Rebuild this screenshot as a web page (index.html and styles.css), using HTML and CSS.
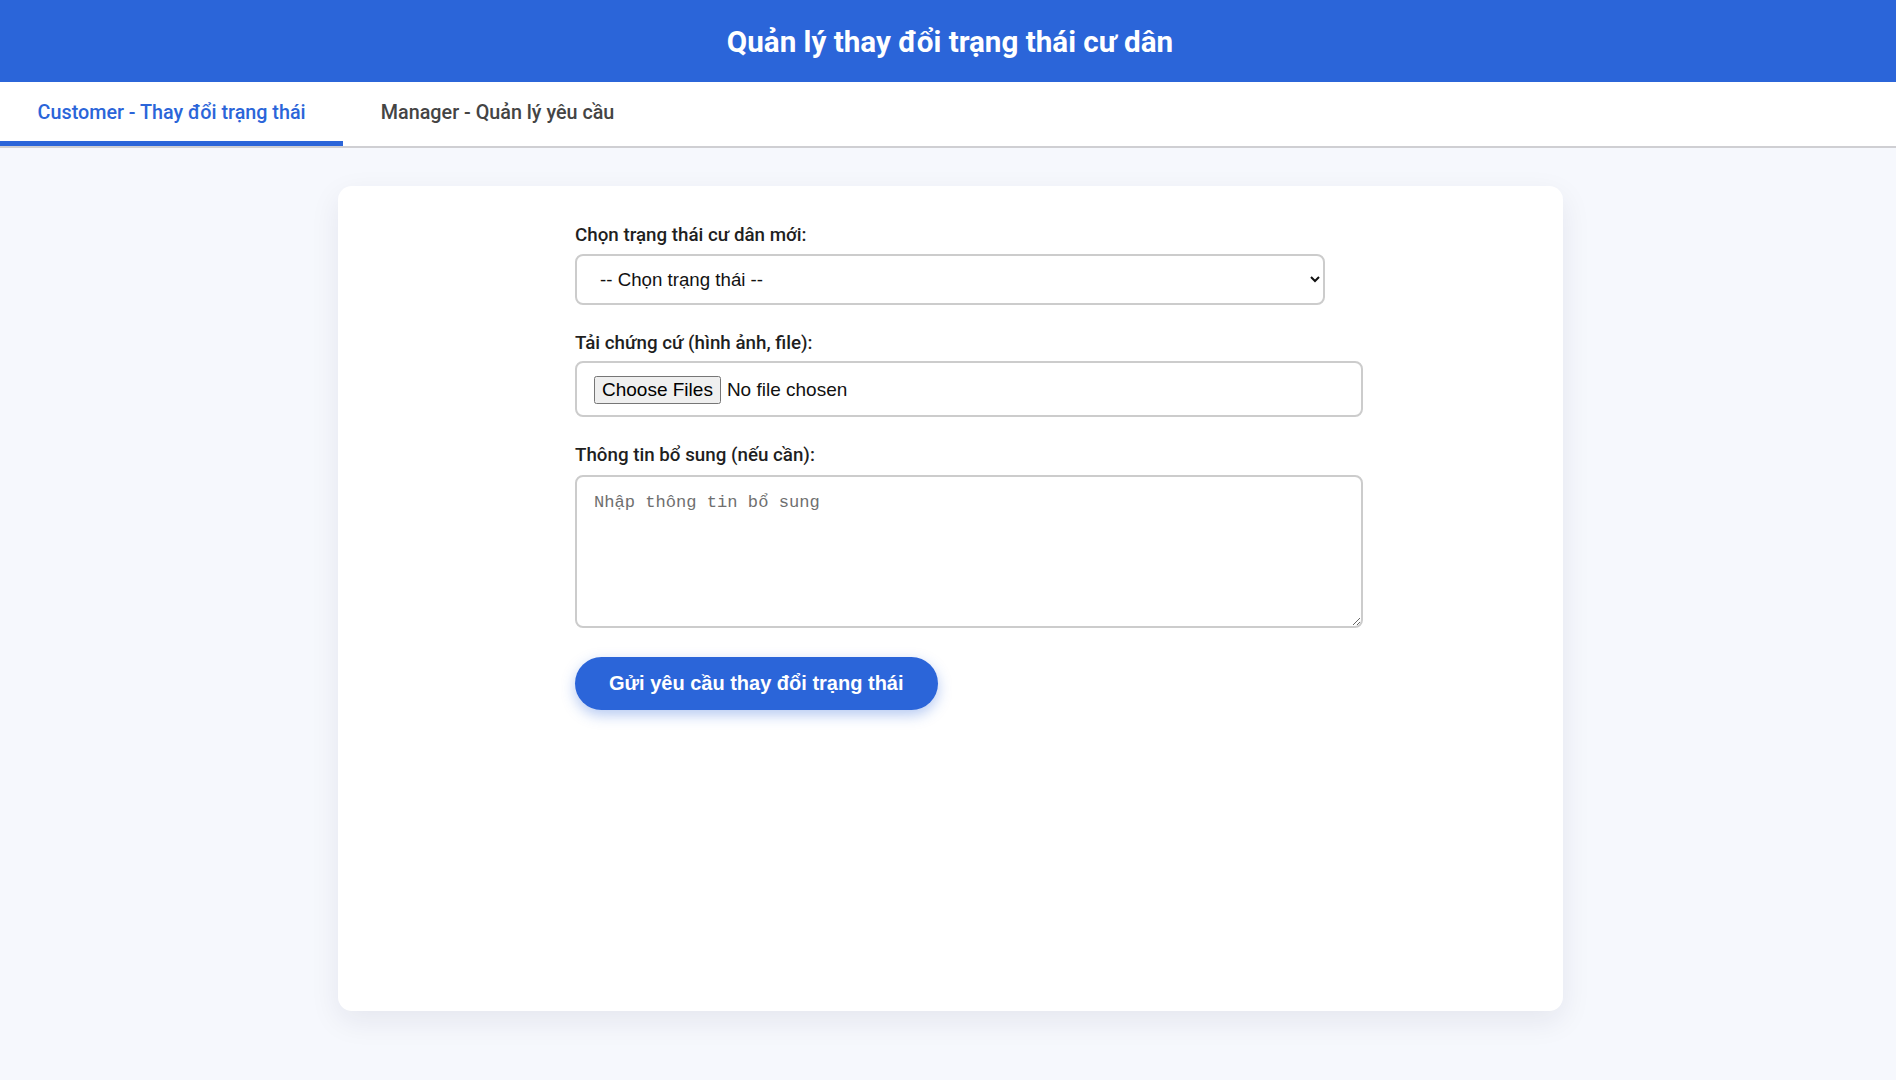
FILE: index.html
```html
<!DOCTYPE html>
<html lang="vi">
<head>
<meta charset="utf-8">
<title>Quản lý thay đổi trạng thái cư dân</title>
<link rel="stylesheet" href="styles.css">
</head>
<body>
<header class="app-header">
  <h1 class="app-title">Quản lý thay đổi trạng thái cư dân</h1>
</header>
<nav class="tabs">
  <div class="tab tab-active">Customer - Thay đổi trạng thái</div>
  <div class="tab">Manager - Quản lý yêu cầu</div>
</nav>
<main class="main">
  <section class="card">
    <form class="form">
      <div class="group">
        <label class="label" for="status">Chọn trạng thái cư dân mới:</label>
        <select id="status" class="select">
          <option>-- Chọn trạng thái --</option>
        </select>
      </div>
      <div class="group">
        <label class="label" for="files">Tải chứng cứ (hình ảnh, file):</label>
        <input id="files" class="file" type="file" multiple>
      </div>
      <div class="group">
        <label class="label" for="note">Thông tin bổ sung (nếu cần):</label>
        <textarea id="note" class="textarea" placeholder="Nhập thông tin bổ sung"></textarea>
      </div>
      <div class="actions">
        <button type="button" class="submit">Gửi yêu cầu thay đổi trạng thái</button>
      </div>
    </form>
  </section>
</main>
</body>
</html>
```
FILE: styles.css
```css
* { box-sizing: border-box; }
html, body { margin: 0; padding: 0; }
body {
  background: #f6f8fd;
  font-family: Roboto, "Liberation Sans", Arial, sans-serif;
  color: #222;
  min-height: 1080px;
}
.app-header {
  background: #2b65d9;
  height: 82px;
  display: flex;
  align-items: center;
  justify-content: center;
  padding: 3px 0 0 4px;
}
.app-title {
  margin: 0;
  color: #fff;
  font-weight: 700;
  font-size: 29.6px;
  line-height: 1;
}
.tabs {
  display: flex;
  background: #fff;
  border-bottom: 2px solid #cfcfd3;
}
.tab {
  height: 64px;
  display: flex;
  align-items: center;
  padding: 2px 37.6px 0;
  font-size: 19.75px;
  font-weight: 500;
  color: #444;
  border-bottom: 5px solid transparent;
}
.tab-active {
  color: #2b65d9;
  border-bottom-color: #2b65d9;
}
.main {
  padding: 38px 0 60px 4px;
}
.card {
  width: 1225px;
  height: 825px;
  margin: 0 auto;
  background: #fff;
  border-radius: 14px;
  box-shadow: 0 10px 30px rgba(20, 30, 70, 0.08);
  padding-top: 38px;
}
.form {
  width: 750px;
  margin: 0 auto;
}
.group {
  margin-bottom: 27px;
}
.label {
  display: block;
  font-size: 18.75px;
  font-weight: 500;
  line-height: 23px;
  margin-bottom: 8px;
  color: #1f1f1f;
}
.select {
  display: block;
  width: 750px;
  height: 51px;
  padding: 0 19px;
  border: 2px solid #ccc;
  border-radius: 8px;
  background: #fff;
  font-family: "Liberation Sans", Arial, sans-serif;
  font-size: 18.7px;
  color: #111;
  margin-top: -1px;
}
.file {
  display: block;
  width: 788px;
  height: 56px;
  padding: 13px 17px;
  border: 2px solid #ccc;
  border-radius: 8px;
  background: #fff;
  font-family: "Liberation Sans", Arial, sans-serif;
  font-size: 19px;
  color: #111;
  margin-top: -2px;
}
.file::file-selector-button {
  margin-right: 6px;
  font-size: 19px;
}
.textarea {
  display: block;
  width: 788px;
  height: 153px;
  padding: 16px 17px 13px;
  border: 2px solid #ccc;
  border-radius: 8px;
  background: #fff;
  font-family: "Liberation Mono", "DejaVu Sans Mono", monospace;
  font-size: 17.1px;
  resize: vertical;
}
.textarea::placeholder { color: #6f6f6f; }
.actions {
  margin-top: 29px;
}
.group:last-of-type { margin-bottom: 0; }
.submit {
  height: 53px;
  padding: 0 34px;
  border: none;
  border-radius: 27px;
  background: #2b65d9;
  color: #fff;
  font-family: "Liberation Sans", Arial, sans-serif;
  font-weight: 700;
  font-size: 20px;
  box-shadow: 0 5px 14px rgba(43, 101, 217, 0.35);
  cursor: pointer;
}
```
